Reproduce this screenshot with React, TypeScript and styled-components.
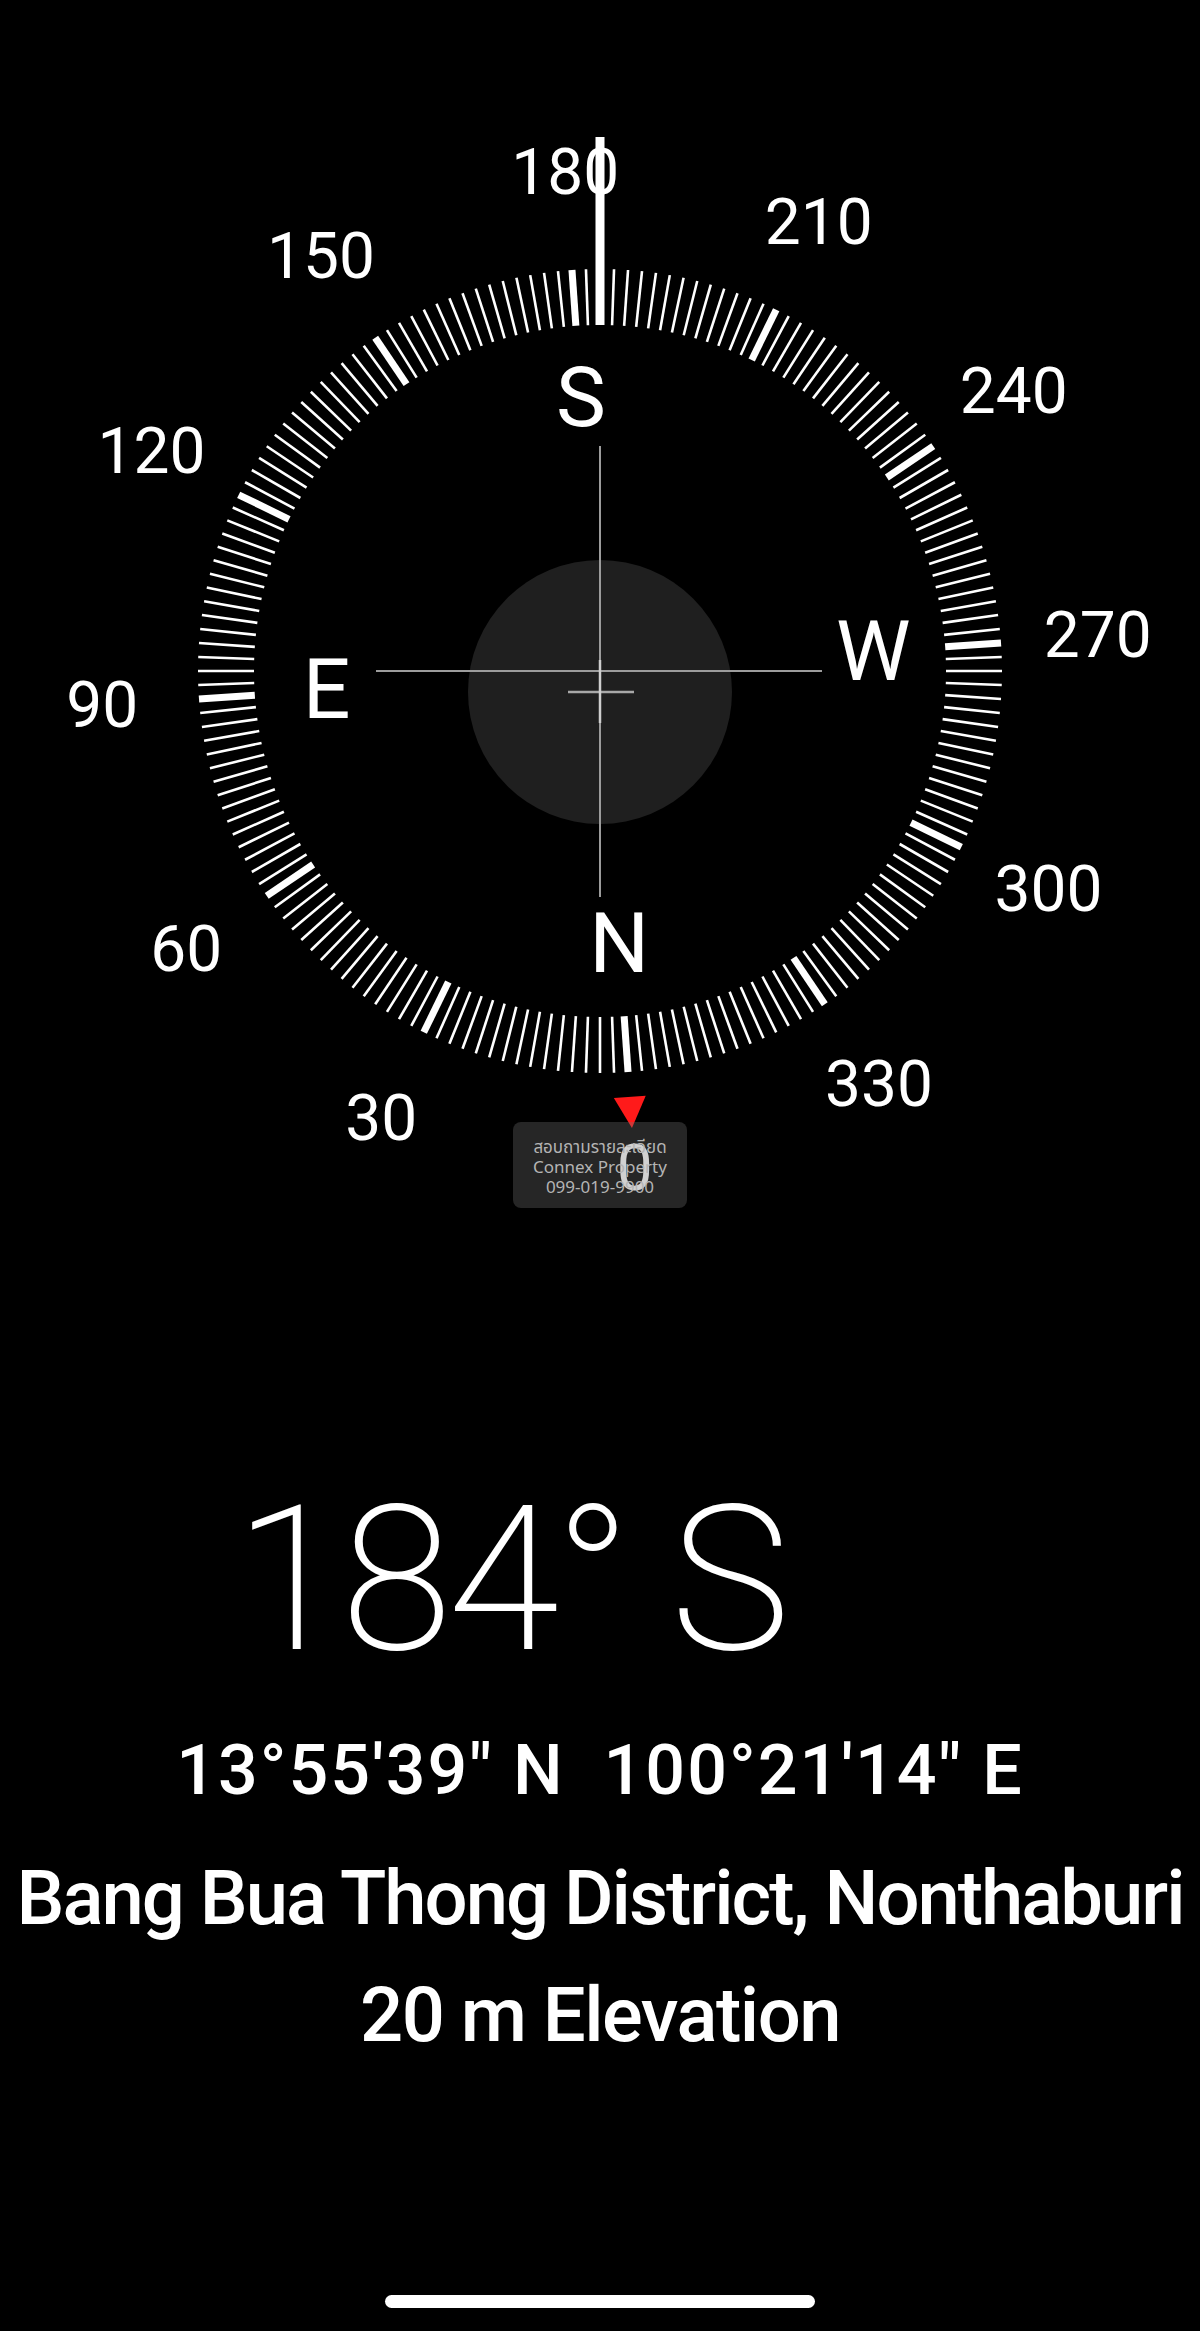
import React from 'react';
import styled, { createGlobalStyle } from 'styled-components';

const HEADING = 184;
const CX = 600;
const CY = 671;

const GlobalStyle = createGlobalStyle`
  html, body {
    margin: 0;
    padding: 0;
    background: #000;
  }
  body {
    font-family: Roboto, "Liberation Sans", sans-serif;
    color: #fff;
  }
`;

// dial degree -> screen point, dial is turned so the heading sits at the top
const polar = (deg: number, r: number) => {
  const t = ((deg - HEADING) * Math.PI) / 180;
  return { x: CX + r * Math.sin(t), y: CY - r * Math.cos(t) };
};

const ticks = Array.from({ length: 180 }, (_, i) => i * 2);
const degreeMarks = Array.from({ length: 12 }, (_, i) => i * 30);
const cardinals = [
  { deg: 0, label: 'N' },
  { deg: 90, label: 'E' },
  { deg: 180, label: 'S' },
  { deg: 270, label: 'W' },
];

const Compass: React.FC = () => {
  const a = polar(0, 427);
  const tip = polar(0, 458);
  const t = ((0 - HEADING) * Math.PI) / 180;
  const px = Math.cos(t) * 16;
  const py = Math.sin(t) * 16;

  return (
    <CompassCanvas>
      <Dial width={1200} height={1290} viewBox="0 0 1200 1290">
        <circle cx={CX} cy={692} r={132} fill="#1f1f1f" />
        {ticks.map((d) => {
          const p1 = polar(d, 402);
          const p2 = polar(d, 346);
          return (
            <line
              key={d}
              x1={p1.x}
              y1={p1.y}
              x2={p2.x}
              y2={p2.y}
              stroke="#fff"
              strokeWidth={d % 30 === 0 ? 7 : 2.6}
            />
          );
        })}
        <line x1={CX} y1={137} x2={CX} y2={325} stroke="#fff" strokeWidth={9} />
        <line x1={CX} y1={446} x2={CX} y2={897} stroke="#9c9c9c" strokeWidth={2} />
        <line x1={376} y1={CY} x2={822} y2={CY} stroke="#9c9c9c" strokeWidth={2} />
        <line x1={568} y1={692} x2={634} y2={692} stroke="#a8a8a8" strokeWidth={2.5} />
        <line x1={CX} y1={660} x2={CX} y2={723} stroke="#cfcfcf" strokeWidth={2.5} />
        <polygon
          points={`${a.x + px},${a.y + py} ${a.x - px},${a.y - py} ${tip.x},${tip.y}`}
          fill="#ff1a1a"
        />
      </Dial>

      {degreeMarks.map((d) => {
        const p = polar(d, 499);
        return (
          <DegreeLabel key={d} style={{ left: p.x, top: p.y }}>
            {d}
          </DegreeLabel>
        );
      })}

      {cardinals.map((c) => {
        const p = polar(c.deg, 274);
        return (
          <CardinalLabel key={c.label} style={{ left: p.x, top: p.y }}>
            {c.label}
          </CardinalLabel>
        );
      })}

      <Watermark>
        <span>สอบถามรายละเอียด</span>
        <span>Connex Property</span>
        <span>099-019-9900</span>
      </Watermark>
    </CompassCanvas>
  );
};

const App: React.FC = () => (
  <>
    <GlobalStyle />
    <Screen>
      <Compass />
      <Readout>
        <Heading>184° S</Heading>
        <InfoLine $size={70} $gap={53} $track={2}>
          13°55′39″ N&nbsp;&nbsp;100°21′14″ E
        </InfoLine>
        <InfoLine $size={76} $gap={55} $track={-2}>
          Bang Bua Thong District, Nonthaburi
        </InfoLine>
        <InfoLine $size={76} $gap={41} $track={-1.5}>
          20 m Elevation
        </InfoLine>
      </Readout>
      <HomeIndicator />
    </Screen>
  </>
);

const Screen = styled.div`
  width: 1200px;
  height: 2331px;
  background: #000;
  display: flex;
  flex-direction: column;
  overflow: hidden;
`;

const CompassCanvas = styled.div`
  position: relative;
  height: 1290px;
  flex-shrink: 0;
`;

const Dial = styled.svg`
  display: block;
`;

const DegreeLabel = styled.span`
  position: absolute;
  transform: translate(-50%, -50%);
  font-size: 64px;
  font-weight: 400;
  line-height: 1;
  white-space: nowrap;
  color: #fff;
`;

const CardinalLabel = styled(DegreeLabel)`
  font-size: 84px;
`;

const Watermark = styled.div`
  position: absolute;
  left: 513px;
  top: 1122px;
  width: 174px;
  height: 86px;
  box-sizing: border-box;
  padding-top: 4px;
  border-radius: 8px;
  background: rgba(115, 115, 115, 0.33);
  display: flex;
  flex-direction: column;
  align-items: center;
  justify-content: center;
  font-family: "Noto Sans", "Noto Sans Thai", "DejaVu Sans", sans-serif;
  font-size: 17px;
  line-height: 20px;
  color: #b4b4b4;
`;

const Readout = styled.div`
  display: flex;
  flex-direction: column;
`;

const Heading = styled.div`
  margin: 189px 0 0 234px;
  font-size: 203px;
  font-weight: 200;
  letter-spacing: -5px;
  line-height: 1;
  white-space: nowrap;
`;

const InfoLine = styled.div<{ $size: number; $gap: number; $track: number }>`
  margin-top: ${(p) => p.$gap}px;
  font-size: ${(p) => p.$size}px;
  font-weight: 500;
  letter-spacing: ${(p) => p.$track}px;
  line-height: 1;
  text-align: center;
  white-space: nowrap;
`;

const HomeIndicator = styled.div`
  width: 430px;
  height: 13px;
  border-radius: 7px;
  background: #fff;
  margin: auto auto 23px;
`;

export default App;
